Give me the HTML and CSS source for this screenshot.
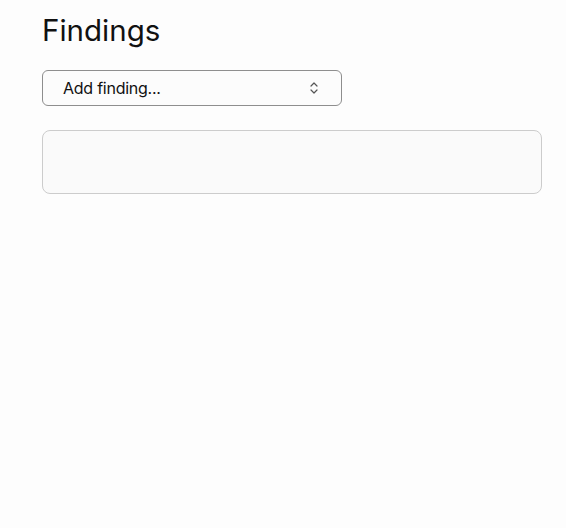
FILE: index.html
```html
<!DOCTYPE html>
<html>
<head>
<meta charset="utf-8">
<link rel="stylesheet" href="styles.css">
</head>
<body>
<main class="page">
  <h1 class="title">Findings</h1>
  <div class="select">
    <span class="select-label">Add finding...</span>
    <svg class="chevrons" width="10" height="14" viewBox="0 0 10 14" fill="none" stroke="#555" stroke-width="1.2" stroke-linecap="round" stroke-linejoin="round">
      <path d="M2 5 L5 2 L8 5"/>
      <path d="M2 9 L5 12 L8 9"/>
    </svg>
  </div>
  <div class="list"></div>
</main>
</body>
</html>
```
FILE: styles.css
```css
html, body {
  margin: 0;
  padding: 0;
  background: #fdfdfd;
}
body {
  font-family: Inter, "Liberation Sans", sans-serif;
  color: #111111;
}
.page {
  padding: 12px 42px 0 42px;
  width: 500px;
}
.title {
  margin: 0;
  font-size: 29.5px;
  font-weight: 400;
  line-height: 36px;
  letter-spacing: 0;
}
.select {
  margin-top: 22px;
  width: 300px;
  height: 36px;
  box-sizing: border-box;
  border: 1px solid #8e8e8e;
  border-radius: 6px;
  background: #fcfcfc;
  display: flex;
  align-items: center;
  justify-content: space-between;
  padding: 0 22px 0 20px;
}
.select-label {
  font-size: 16px;
  letter-spacing: -0.25px;
  color: #111111;
}
.chevrons {
  display: block;
}
.list {
  margin-top: 24px;
  width: 500px;
  height: 64px;
  box-sizing: border-box;
  border: 1px solid #cccccc;
  border-radius: 8px;
  background: #fafafa;
}
```
